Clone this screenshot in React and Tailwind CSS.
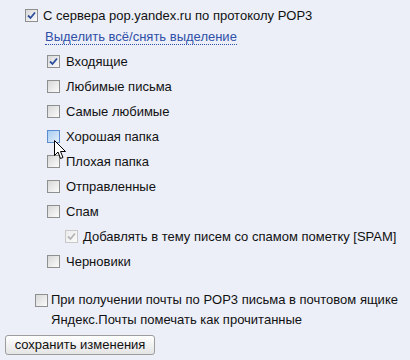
const font = { fontFamily: '"Liberation Sans", Arial, sans-serif' };

const Box = ({ checked = false, disabled = false, hover = false }) => {
  let cls = 'border-[#8e8f8f] bg-gradient-to-br from-[#d8d8d8] to-[#fbfbfb]';
  if (hover) cls = 'border-[#5b8ccf] bg-gradient-to-br from-[#a9cdf2] to-[#e3effb]';
  if (disabled) cls = 'border-[#c8c8c8] bg-gradient-to-br from-[#ececec] to-[#fbfbfb]';
  return (
    <span className={`relative inline-flex h-[13px] w-[13px] shrink-0 items-center justify-center border ${cls}`}>
      {checked && (
        <svg width="9" height="9" viewBox="0 0 9 9">
          <path
            d="M1 4.5 L3.5 7 L8 1.5"
            fill="none"
            stroke={disabled ? '#b5b5b5' : '#2d4f9f'}
            strokeWidth="1.8"
          />
        </svg>
      )}
    </span>
  );
};

const Row = ({ label, checked, hover, indent = 'pl-[47px]', gap = 'ml-[6px]', disabled }) => (
  <div className={`flex h-[25px] items-center ${indent}`}>
    <Box checked={checked} hover={hover} disabled={disabled} />
    <span className={`${gap} text-[13px] leading-none text-[#111]`}>{label}</span>
  </div>
);

const Cursor = () => (
  <svg className="absolute left-[54px] top-[140px]" width="13" height="20" viewBox="0 0 13 20">
    <path
      d="M0.5 0.5 L0.5 15.5 L4 12 L6.5 18.5 L9 17.5 L6.5 11.5 L11.5 11.5 Z"
      fill="#fff"
      stroke="#000"
      strokeWidth="1"
      strokeLinejoin="round"
    />
  </svg>
);

export default function App() {
  const folders = [
    { label: 'Входящие', checked: true },
    { label: 'Любимые письма' },
    { label: 'Самые любимые' },
    { label: 'Хорошая папка', hover: true },
    { label: 'Плохая папка' },
    { label: 'Отправленные' },
    { label: 'Спам' },
  ];

  return (
    <div className="relative h-[360px] w-[410px] overflow-hidden bg-[#eceff8] pt-[5px]" style={font}>
      <div className="flex h-[20px] items-center pl-[25px]">
        <Box checked />
        <span className="ml-[5px] text-[13px] leading-none text-[#111]">
          С сервера pop.yandex.ru по протоколу POP3
        </span>
      </div>
      <div className="flex h-[24px] items-center pl-[45px]">
        <a className="cursor-pointer border-b border-dotted border-[#2f4fa8] text-[13px] leading-[15px] text-[#2f4fa8]">
          Выделить всё/снять выделение
        </a>
      </div>
      {folders.map((f) => (
        <Row key={f.label} {...f} />
      ))}
      <Row
        label="Добавлять в тему писем со спамом пометку [SPAM]"
        checked
        disabled
        indent="pl-[65px]"
        gap="ml-[5px]"
      />
      <Row label="Черновики" />
      <div className="mt-[16px] flex pl-[35px]">
        <div className="flex h-[20px] items-center">
          <Box />
        </div>
        <div className="ml-[3px] text-[13px] leading-[20px] text-[#111]">
          При получении почты по POP3 письма в почтовом ящике
          <br />
          Яндекс.Почты помечать как прочитанные
        </div>
      </div>
      <div className="mt-[2px] pl-[5px]">
        <button className="h-[20px] w-[150px] rounded-[3px] border border-[#9c9c9c] bg-gradient-to-b from-[#ffffff] to-[#e4e4e4] text-[13px] leading-none text-[#111]">
          сохранить изменения
        </button>
      </div>
      <Cursor />
    </div>
  );
}
